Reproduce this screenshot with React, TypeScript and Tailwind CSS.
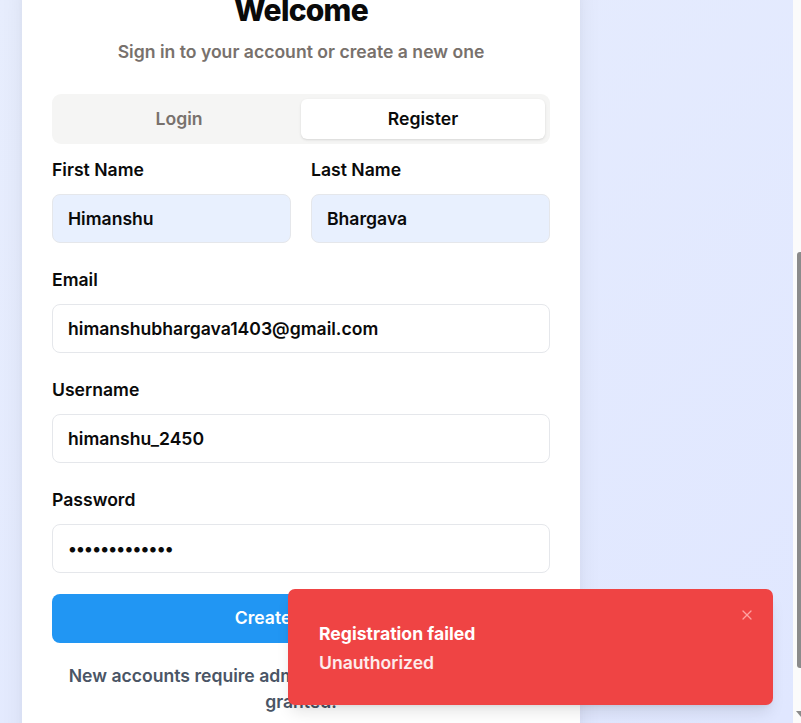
import { X } from "lucide-react"

const Field = ({ label, value, type = "text", autofill = false }: { label: string; value: string; type?: string; autofill?: boolean }) => {
  return (
    <div className="flex flex-col">
      <label className="h-[24px] leading-[24px] text-[17.6px] font-semibold text-[#0a0a0a]">{label}</label>
      <input
        type={type}
        defaultValue={value}
        readOnly
        className={`mt-[12px] h-[49px] w-full rounded-[8px] border border-[#e5e7eb] px-[15px] text-[17.6px] font-semibold text-[#0a0a0a] outline-none ${
          autofill ? "bg-[#e8f0fe]" : "bg-white"
        } ${type === "password" ? "tracking-[-0.8px]" : ""}`}
      />
    </div>
  )
}

export default function App() {
  return (
    <div className="flex h-[723px] w-full overflow-hidden font-['Inter',sans-serif]">
      {/* Page */}
      <div className="relative flex-1 overflow-hidden bg-linear-to-br from-[#e7edfd] to-[#e0e7ff]">
        <div className="-mt-[40px] pl-[22px]">
          <div className="w-[558px] bg-white px-[30px] pt-[30px] pb-[40px] shadow-xl">
            <h1 className="text-center text-[30px] leading-[40px] font-extrabold tracking-tight text-[#0a0a0a]">Welcome</h1>
            <p className="mt-[9px] text-center text-[17.6px] leading-[26px] font-semibold text-[#78716c]">
              Sign in to your account or create a new one
            </p>

            {/* Tabs */}
            <div className="mt-[29px] grid h-[50px] grid-cols-2 rounded-[9px] bg-[#f5f5f4] p-[5px]">
              <button className="rounded-[6px] text-[17.6px] font-semibold text-[#78716c]">Login</button>
              <button className="rounded-[6px] bg-white text-[17.6px] font-semibold text-[#0a0a0a] shadow-sm">Register</button>
            </div>

            <div className="mt-[14px] flex flex-col gap-[25px]">
              <div className="grid grid-cols-2 gap-[20px]">
                <Field label="First Name" value="Himanshu" autofill />
                <Field label="Last Name" value="Bhargava" autofill />
              </div>
              <Field label="Email" value="himanshubhargava1403@gmail.com" />
              <Field label="Username" value="himanshu_2450" />
              <Field label="Password" value="Himanshu@2450" type="password" />
            </div>

            <button className="mt-[21px] h-[49px] w-full rounded-[8px] bg-[#2196f3] text-[17.6px] font-semibold text-white">
              Create Account
            </button>

            <p className="mt-[20px] text-center text-[17.6px] leading-[26px] font-semibold text-[#4a5565]">
              New accounts require admin approval before access is granted.
            </p>
          </div>
        </div>

        {/* Toast */}
        <div className="absolute right-[20px] bottom-[18px] h-[116px] w-[485px] rounded-[7px] bg-[#ef4444] px-[31px] pt-[33px] shadow-lg">
          <div className="text-[17.6px] leading-[24px] font-bold text-white">Registration failed</div>
          <div className="mt-[5px] text-[17.6px] leading-[24px] font-semibold text-white/90">Unauthorized</div>
          <X className="absolute top-[18px] right-[18px] h-[16px] w-[16px] text-red-300" strokeWidth={1.8} />
        </div>
      </div>

      {/* Scrollbar */}
      <div className="flex w-[8px] flex-col bg-[#fbfbfb]">
        <div className="mt-[252px] ml-[4px] h-[416px] w-[4px] rounded-tl-[3px] rounded-bl-[3px] bg-[#8b8b8b]" />
        <div className="mt-auto mb-[6px] ml-[3px]">
          <svg width="5" height="6" viewBox="0 0 5 6">
            <polygon points="0,0 5,0 5,6" fill="#8b8b8b" />
          </svg>
        </div>
      </div>
    </div>
  )
}
